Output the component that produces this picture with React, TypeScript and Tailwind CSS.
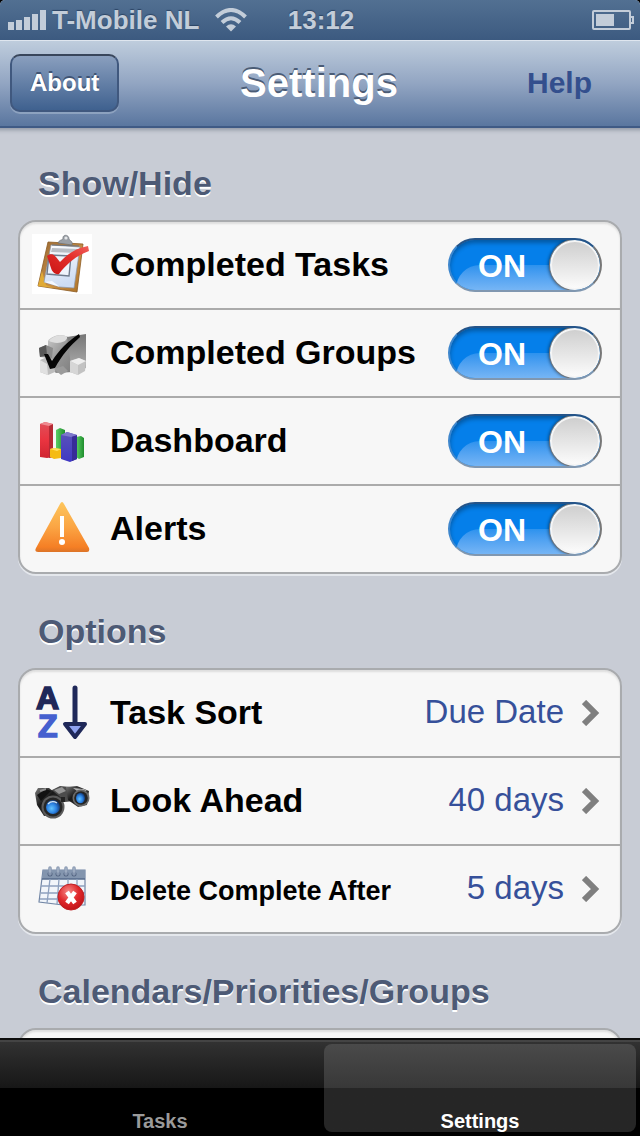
import React, { useState } from "react";

const ClipboardIcon = () => (
  <svg viewBox="0 0 60 60" className="w-15 h-15 shrink-0 overflow-visible" aria-hidden="true">
    <defs>
      <linearGradient id="board" x1="0" y1="0" x2="1" y2="1">
        <stop offset="0" stopColor="#9a6a35" />
        <stop offset="0.6" stopColor="#c98f45" />
        <stop offset="1" stopColor="#a96f25" />
      </linearGradient>
      <linearGradient id="paper" x1="0" y1="0" x2="0.3" y2="1">
        <stop offset="0" stopColor="#ffffff" />
        <stop offset="1" stopColor="#cddcf3" />
      </linearGradient>
      <linearGradient id="redCheck" x1="0" y1="1" x2="1" y2="0">
        <stop offset="0" stopColor="#c91414" />
        <stop offset="0.6" stopColor="#e5302c" />
        <stop offset="1" stopColor="#f0605a" />
      </linearGradient>
    </defs>
    <rect x="0" y="-1" width="60" height="60" fill="#ffffff" />
    <path d="M16 7 L51 9 L45 57 L6 51 Z" fill="url(#board)" stroke="#8b5a22" strokeWidth="0.8" strokeLinejoin="round" />
    <path d="M6 51 L10 36 L14 50 L22 53 Z" fill="#e0aa35" />
    <path d="M19 10 L48 12 L42 53 L28 52 L12 47 Z" fill="url(#paper)" stroke="#8b97ab" strokeWidth="0.7" />
    <path d="M12 47 L20 46 L28 52 Z" fill="#f4f8ff" />
    <path d="M20 13 L46 14 L45 18 L19 17 Z" fill="#b9bec6" />
    <path d="M20 10 L47 11" stroke="#6c737d" strokeWidth="1" />
    <path d="M17 20 L39 21 L37 41 L15 39 Z" fill="#eef3fb" stroke="#6f7b8d" strokeWidth="1.4" />
    <path d="M26 8 C27 5 30 5 31 4 C30 -1 37 -1 37 4 C38 6 41 6 40 10 Z" fill="#9a9fa6" stroke="#6e7379" strokeWidth="0.7" />
    <circle cx="34" cy="3" r="1.6" fill="#e4e6e8" />
    <path d="M15 21 C18 18 22 19 24 22 L28 27 C36 18 45 13 56 11 L57 16 C46 20 36 27 27 39 C24 40 20 37 19 33 Z" fill="url(#redCheck)" />
  </svg>
);

const GroupsIcon = () => (
  <svg viewBox="0 0 60 60" className="w-15 h-15 shrink-0" aria-hidden="true">
    <defs>
      <linearGradient id="cube" x1="0" y1="0" x2="1" y2="1">
        <stop offset="0" stopColor="#c9c9c9" />
        <stop offset="0.5" stopColor="#969696" />
        <stop offset="1" stopColor="#7e7e7e" />
      </linearGradient>
      <linearGradient id="cubeSide" x1="0" y1="0" x2="0" y2="1">
        <stop offset="0" stopColor="#767676" />
        <stop offset="1" stopColor="#b2b2b2" />
      </linearGradient>
    </defs>
    <path d="M16 18 C20 12 30 11 36 14 L41 49 L24 50 L16 44 Z" fill="url(#cube)" />
    <path d="M17 18 C21 12 31 11 36 14 L33 18 C27 21 21 20 17 18 Z" fill="#dedede" />
    <path d="M35 14 L54 11 L54 45 L40 49 Z" fill="url(#cubeSide)" />
    <path d="M7 25 L14 22 L21 25 L20 35 L8 34 Z" fill="#8a8a8a" />
    <path d="M7 25 L14 22 L15 32 L8 34 Z" fill="#585858" />
    <path d="M8 37 L15 34 L24 38 L23 49 L16 52 L8 49 Z" fill="#bdbdbd" />
    <path d="M8 37 L15 41 L16 52 L8 49 Z" fill="#e0e0e0" />
    <path d="M22 46 L31 43 L36 48 L29 52 Z" fill="#9b9b9b" />
    <path d="M38 38 L47 35 L54 38 L53 48 L46 52 L38 49 Z" fill="#c2c2c2" />
    <path d="M38 38 L47 35 L54 38 L46 42 Z" fill="#eeeeee" />
    <path d="M38 38 L46 42 L46 52 L38 49 Z" fill="#d6d6d6" />
    <path d="M12 31 L16 31 L20 38 C27 27 36 18 47 11 L48 14 C38 23 30 32 23 45 L18 46 Z" fill="#050505" />
  </svg>
);

const DashboardIcon = () => (
  <svg viewBox="0 0 60 60" className="w-15 h-15 shrink-0" aria-hidden="true">
    <defs>
      <linearGradient id="redBar" x1="0" y1="0" x2="0" y2="1">
        <stop offset="0" stopColor="#e0505a" />
        <stop offset="0.5" stopColor="#ea3440" />
        <stop offset="1" stopColor="#cf2531" />
      </linearGradient>
      <linearGradient id="blueBar" x1="0" y1="0" x2="0" y2="1">
        <stop offset="0" stopColor="#5a54b8" />
        <stop offset="1" stopColor="#4038c4" />
      </linearGradient>
      <linearGradient id="greenBar" x1="0" y1="0" x2="1" y2="0">
        <stop offset="0" stopColor="#5bd066" />
        <stop offset="1" stopColor="#1f8d2d" />
      </linearGradient>
    </defs>
    <path d="M24 19 L28 17 L33 19 V40 H24 Z" fill="url(#greenBar)" />
    <path d="M44 26 L49 25 L52 27 V46 L47 48 L44 46 Z" fill="url(#greenBar)" />
    <path d="M8 13 L13 11 L21 13 V46 L15 47 L8 46 Z" fill="url(#redBar)" />
    <path d="M17 14 L21 13 V46 L17 47 Z" fill="#b52a35" />
    <path d="M8 13 L13 11 L21 13 L17 15 Z" fill="#ee8a90" />
    <path d="M18 38 L22 37 L29 38 V47 L22 48 L18 46 Z" fill="#f5bb14" />
    <path d="M18 38 L22 37 L29 38 L25 40 Z" fill="#ffe261" />
    <path d="M29 24 L35 21 L45 24 V48 L38 51 L29 48 Z" fill="url(#blueBar)" />
    <path d="M40 25 L45 24 V48 L40 50 Z" fill="#372d98" />
    <path d="M29 24 L35 21 L45 24 L39 26 Z" fill="#7d78cc" />
  </svg>
);

const AlertIcon = () => (
  <svg viewBox="0 0 60 60" className="w-15 h-15 shrink-0" aria-hidden="true">
    <defs>
      <linearGradient id="warn" x1="0" y1="0" x2="0" y2="1">
        <stop offset="0" stopColor="#fdc65c" />
        <stop offset="0.5" stopColor="#fba544" />
        <stop offset="0.9" stopColor="#f57f25" />
        <stop offset="1" stopColor="#dc7428" />
      </linearGradient>
    </defs>
    <path d="M28 5 Q30 1 32 5 L57 49 Q58 53 55 53 H6 Q2 53 4 49 Z" fill="url(#warn)" />
    <rect x="28" y="17" width="4" height="21" fill="#ffffff" />
    <circle cx="30" cy="43" r="3" fill="#ffffff" />
  </svg>
);

const SortIcon = () => (
  <svg viewBox="0 0 60 60" className="w-15 h-15 shrink-0 overflow-visible" aria-hidden="true">
    <text x="4" y="26" fontSize="32" fontWeight="bold" fill="#1f2859" stroke="#1f2859" strokeWidth="1.6">A</text>
    <text x="6" y="54" fontSize="32" fontWeight="bold" fill="#4560cf" stroke="#4560cf" strokeWidth="1.6">Z</text>
    <path d="M43 5 V41" stroke="#1f2859" strokeWidth="5" strokeLinecap="round" />
    <path d="M33 41 H53 L43 54 Z" fill="#8fa2f0" stroke="#1f2859" strokeWidth="4" strokeLinejoin="round" />
  </svg>
);

const BinocularsIcon = () => (
  <svg viewBox="0 0 60 60" className="w-15 h-15 shrink-0" aria-hidden="true">
    <defs>
      <radialGradient id="lens" cx="0.4" cy="0.6" r="0.7">
        <stop offset="0" stopColor="#62c4ff" />
        <stop offset="0.5" stopColor="#2a7fe0" />
        <stop offset="1" stopColor="#0d2350" />
      </radialGradient>
      <linearGradient id="barrel" x1="0" y1="0" x2="1" y2="1">
        <stop offset="0" stopColor="#7b7b7b" />
        <stop offset="0.4" stopColor="#191919" />
        <stop offset="1" stopColor="#555555" />
      </linearGradient>
    </defs>
    <path d="M18 20 L28 15 L38 16 L42 30 L33 31 L24 26 Z" fill="#4c4c4c" />
    <path d="M22 19 L30 16 L34 20 L27 23 Z" fill="#969696" />
    <path d="M34 16 L45 15 L57 20 L55 34 L46 36 L36 29 Z" fill="url(#barrel)" />
    <path d="M41 17 L52 18 L55 20 L45 20 Z" fill="#b5b5b5" />
    <path d="M3 22 L6 17 L17 17 L31 28 L29 44 L12 45 L5 34 Z" fill="url(#barrel)" />
    <path d="M5 24 L14 18 L19 20 L9 30 Z" fill="#111111" />
    <path d="M8 20 L14 18" stroke="#8e8e8e" strokeWidth="2" />
    <circle cx="21" cy="36" r="11.5" fill="#5b5b5b" />
    <circle cx="21" cy="36" r="9.5" fill="#262626" />
    <circle cx="21" cy="36" r="7" fill="url(#lens)" />
    <path d="M16 33 Q20 29 25 32" stroke="#d5e8f7" strokeWidth="1.2" fill="none" />
    <circle cx="49" cy="27" r="8.5" fill="#6a6a6a" />
    <circle cx="49" cy="27" r="6.8" fill="#242424" />
    <ellipse cx="48.5" cy="27" rx="4.5" ry="5.2" fill="url(#lens)" />
    <path d="M31 26 V31" stroke="#222222" strokeWidth="4" />
  </svg>
);

const DeleteIcon = () => (
  <svg viewBox="0 0 60 60" className="w-15 h-15 shrink-0" aria-hidden="true">
    <defs>
      <radialGradient id="redDot" cx="0.4" cy="0.3" r="0.8">
        <stop offset="0" stopColor="#f58b88" />
        <stop offset="0.5" stopColor="#e0282b" />
        <stop offset="1" stopColor="#b80d12" />
      </radialGradient>
    </defs>
    <path d="M11 11 H53 V46 H31 L7 43 Z" fill="#f1f5fa" stroke="#7286a5" strokeWidth="1.2" />
    <path d="M11 11 H53 V20 H10 Z" fill="#8395ae" />
    <path d="M10 20 H53" stroke="#566b8b" strokeWidth="1.5" />
    <path d="M9 27 H53 M9 34 H53 M8 40 H53 M18 20 L15 44 M27 20 L25 45 M36 20 V46 M45 20 V46" stroke="#8da0be" strokeWidth="1.3" />
    {[18, 26, 34, 42].map((x) => (
      <g key={x}>
        <circle cx={x} cy="15" r="2.5" fill="#50627e" />
        <path d={`M${x} 15 V9`} stroke="#8797b0" strokeWidth="3.5" strokeLinecap="round" />
        <path d={`M${x} 13 V9`} stroke="#aab7ca" strokeWidth="1.3" strokeLinecap="round" />
      </g>
    ))}
    <circle cx="39" cy="38" r="13" fill="url(#redDot)" stroke="#bf2024" strokeWidth="1" />
    <path d="M35 33 L43 44 M43 33 L35 44" stroke="#ffffff" strokeWidth="4.5" />
  </svg>
);

const StatusBar = () => (
  <div className="flex h-10 items-center justify-between bg-linear-to-b from-[#527092] to-[#3c5a80] pr-[6px] pl-2 text-[26px] leading-10 font-bold text-[#c3cdd9] [text-shadow:0_-1px_1px_#2c4565]">
    <div className="flex flex-1 items-center">
      <svg viewBox="0 0 38 20" className="mr-[6px] h-5 w-[38px]" fill="currentColor" role="img" aria-label="Signal">
        <rect x="0" y="12" width="6" height="8" />
        <rect x="8" y="10" width="6" height="10" />
        <rect x="16" y="7" width="6" height="13" />
        <rect x="24" y="4" width="6" height="16" />
        <rect x="32" y="0" width="6" height="20" />
      </svg>
      <span>T-Mobile NL</span>
      <svg viewBox="0 0 32 24" className="ml-4 h-6 w-8" fill="none" stroke="currentColor" strokeWidth="4" role="img" aria-label="Wi-Fi">
        <path d="M1.5 9 Q16 -5 30.5 9" />
        <path d="M7 14.5 Q16 6 25 14.5" />
        <path d="M11 18.5 Q16 14 21 18.5 L16 23.5 Z" fill="currentColor" stroke="none" />
      </svg>
    </div>
    <span>13:12</span>
    <div className="flex flex-1 justify-end">
      <svg viewBox="0 0 42 20" className="h-5 w-[42px]" fill="none" stroke="currentColor" strokeWidth="2" role="img" aria-label="Battery">
        <rect x="1" y="1" width="37" height="18" rx="1" />
        <path d="M38 7 H41 V13 H38" />
        <rect x="4" y="4" width="18" height="12" fill="currentColor" stroke="none" />
      </svg>
    </div>
  </div>
);

const NavBar = () => (
  <header className="grid h-22 grid-cols-[1fr_auto_1fr] items-center border-t border-b-2 border-t-[#dfe6ef] border-b-[#3f5a85] bg-linear-to-b from-[#bfcddd] via-[#92a5c2] to-[#5a769f] pr-3 pb-[2px] pl-[10px]">
    <button
      type="button"
      className="h-[58px] justify-self-start rounded-[10px] border-2 border-[#40587e] border-t-[#39465b] bg-linear-to-b from-[#8a9fbe] to-[#3f618f] px-[18px] text-2xl font-bold text-white shadow-[0_2px_0_#8da2bf] [text-shadow:0_-2px_0_#3f5474]"
    >
      About
    </button>
    <h1 className="text-[40px] leading-none font-bold text-white [text-shadow:0_-2px_0_#4b5c75]">Settings</h1>
    <button type="button" className="mr-9 justify-self-end text-3xl font-bold text-[#334f8d]">
      Help
    </button>
  </header>
);

const Section = ({ title, children }: { title: string; children: React.ReactNode }) => (
  <section>
    <h2 className="mb-[15px] ml-5 text-[34px] leading-11 font-bold text-[#4d5a75] [text-shadow:0_2px_0_#fff]">{title}</h2>
    <div className="divide-y-2 divide-[#ababab] rounded-[18px] border-2 border-[#a9abae] bg-[#f7f7f7] shadow-[0_2px_0_#e4e7ec,inset_0_2px_2px_#dedede]">
      {children}
    </div>
  </section>
);

interface ToggleRowProps {
  icon: React.ReactNode;
  label: string;
}

const ToggleRow = ({ icon, label }: ToggleRowProps) => {
  const [on, setOn] = useState(true);

  return (
    <label className="box-content flex h-[86px] cursor-pointer items-center gap-[18px] pr-[18px] pl-3">
      {icon}
      <span className="flex-1 pb-[2px] text-[34px] leading-10 font-bold whitespace-nowrap text-black">{label}</span>
      <input
        type="checkbox"
        role="switch"
        checked={on}
        onChange={(e) => setOn(e.target.checked)}
        className="peer sr-only"
      />
      <span
        className={`relative flex h-[54px] w-[154px] shrink-0 items-center overflow-hidden rounded-full border-2 shadow-[inset_0_3px_4px_rgba(0,0,0,0.3)] peer-focus-visible:ring-2 ${
          on ? "border-[#3e86cc] border-t-[#245489] border-r-[#777] border-b-[#8097b0] bg-[#057fea]" : "flex-row-reverse border-[#999] bg-[#eee]"
        }`}
      >
        {on && (
          <span className="absolute top-[25px] right-0 bottom-0 left-[6px] rounded-tl-[24px] bg-linear-to-b from-[#2c92ee] to-[#75b5f5]" />
        )}
        <span className={`relative flex-1 pt-[2px] pl-1 text-center text-[32px] leading-10 font-bold ${on ? "text-white" : "text-[#7f7f7f]"}`}>
          {on ? "ON" : "OFF"}
        </span>
        <span className="relative h-[50px] w-[50px] rounded-full border-2 border-[#f5f5f5] bg-linear-to-b from-[#cfcfcf] to-[#fbfbfb] shadow-[0_0_0_1px_#777,-1px_0_3px_1px_rgba(0,0,0,0.4)]" />
      </span>
    </label>
  );
};

interface ValueRowProps {
  icon: React.ReactNode;
  label: string;
  value: string;
  small?: boolean;
}

const ValueRow = ({ icon, label, value, small }: ValueRowProps) => (
  <button type="button" className="box-content flex h-[86px] w-[calc(100%-32px)] items-center gap-[18px] pr-5 pl-3 text-left">
    {icon}
    <span className={`flex-1 leading-10 font-bold whitespace-nowrap text-black ${small ? "pt-1 text-[27px]" : "pb-[2px] text-[34px]"}`}>
      {label}
    </span>
    <span className="pb-[2px] text-[33px] leading-10 whitespace-nowrap text-[#36509a]">{value}</span>
    <svg viewBox="0 0 18 26" className="h-[26px] w-[18px] shrink-0" fill="none" stroke="#7f7f7f" strokeWidth="6" aria-hidden="true">
      <path d="M2 2 L13 13 L2 24" />
    </svg>
  </button>
);

const TabBar = ({ active, onChange }: { active: string; onChange: (tab: string) => void }) => (
  <nav className="flex h-[98px] shrink-0 border-t-2 border-[#0c0c0c] bg-black bg-linear-to-b from-[#333] from-0% via-[#171717] via-50% to-black to-50% shadow-[inset_0_2px_0_#444]">
    {["Tasks", "Settings"].map((tab) => (
      <button
        key={tab}
        type="button"
        onClick={() => onChange(tab)}
        className={`m-1 flex flex-1 items-end justify-center rounded-lg text-xl leading-[22px] font-bold ${
          active === tab
            ? "bg-linear-to-b from-[#4a4a4a] from-0% via-[#383838] via-50% to-[#262626] to-50% text-white"
            : "text-[#9a9a9a]"
        }`}
      >
        {tab}
      </button>
    ))}
  </nav>
);

const App = () => {
  const [activeTab, setActiveTab] = useState("Settings");

  return (
    <div className="h-screen bg-black font-['Liberation_Sans',Arial,sans-serif]">
      <div className="flex h-full flex-col overflow-hidden rounded-t-[5px] bg-[#c8ccd5]">
        <StatusBar />
        <NavBar />
        <main className="flex min-h-0 flex-1 flex-col gap-[35px] overflow-y-auto px-[18px] pt-[33px] shadow-[inset_0_7px_4px_-5px_#8f96a3] [scrollbar-width:none]">
          <Section title="Show/Hide">
            <ToggleRow icon={<ClipboardIcon />} label="Completed Tasks" />
            <ToggleRow icon={<GroupsIcon />} label="Completed Groups" />
            <ToggleRow icon={<DashboardIcon />} label="Dashboard" />
            <ToggleRow icon={<AlertIcon />} label="Alerts" />
          </Section>
          <Section title="Options">
            <ValueRow icon={<SortIcon />} label="Task Sort" value="Due Date" />
            <ValueRow icon={<BinocularsIcon />} label="Look Ahead" value="40 days" />
            <ValueRow icon={<DeleteIcon />} label="Delete Complete After" value="5 days" small />
          </Section>
          <Section title="Calendars/Priorities/Groups">
            <div className="h-[86px]" />
          </Section>
        </main>
        <TabBar active={activeTab} onChange={setActiveTab} />
      </div>
    </div>
  );
};

export default App;
